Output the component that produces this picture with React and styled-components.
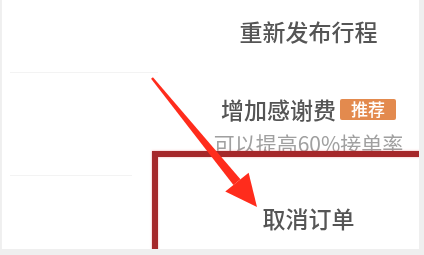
import styled, { createGlobalStyle } from "styled-components";

const GlobalStyle = createGlobalStyle`
    html, body {
        margin: 0;
        padding: 0;
        background: #efefef;
    }
    body {
        font-family: "Noto Sans CJK SC", "Noto Sans", sans-serif;
    }
`;

const Screen = styled.div`
    width: 424px;
    height: 255px;
    background: #efefef;
    overflow: hidden;
`;

const Panel = styled.div`
    position: relative;
    width: 417px;
    height: 249px;
    margin-left: 1px;
    background: #fff;
    border-left: 1px solid #f0f0f0;
    overflow: hidden;
    display: grid;
    grid-template-columns: 196px 1fr;
`;

const LeftCol = styled.div`
    display: flex;
    flex-direction: column;
`;

const LeftBlock = styled.div`
    height: ${(p) => p.h}px;
    margin: 0 ${(p) => p.inset}px 0 8px;
    border-bottom: 1px solid #f3f3f3;
`;

const RightCol = styled.div`
    display: flex;
    flex-direction: column;
    align-items: center;
    filter: blur(0.6px);
`;

const Row = styled.div`
    display: flex;
    flex-direction: column;
    align-items: center;
    padding-top: ${(p) => p.top}px;
`;

const Title = styled.div`
    display: flex;
    align-items: center;
    gap: 4px;
    height: 28px;
    font-size: 23px;
    font-weight: 500;
    line-height: 28px;
    color: #555;
`;

const Badge = styled.span`
    display: inline-flex;
    align-items: center;
    justify-content: center;
    width: 56px;
    height: 21px;
    background: #e38a4e;
    color: #fff;
    font-size: 17px;
    font-weight: 500;
    border-radius: 2px;
`;

const Sub = styled.div`
    margin-top: 7px;
    font-size: 21px;
    line-height: 26px;
    color: #a0a0a0;
`;

const Frame = styled.div`
    position: absolute;
    left: 150px;
    top: 151px;
    width: 300px;
    height: 150px;
    border: 6px solid #a5282a;
    box-shadow: 0 0 2px rgba(230, 90, 90, 0.6), inset 0 0 2px rgba(230, 90, 90, 0.6);
`;

const Arrow = styled.svg`
    position: absolute;
    left: 0;
    top: 0;
    width: 417px;
    height: 249px;
    pointer-events: none;
    filter: blur(0.4px);
`;

export default function App() {
    // arrow geometry
    const tip = [255, 207];
    const d = [0.627, 0.779];
    const p = [-0.779, 0.627];
    const base = [tip[0] - 32 * d[0], tip[1] - 32 * d[1]];
    const start = [150, 78];
    const pt = (c, v, k) => `${c[0] + v[0] * k},${c[1] + v[1] * k}`;
    const shaft = [pt(start, p, -1.2), pt(start, p, 1.2), pt(base, p, 4.5), pt(base, p, -4.5)].join(" ");
    const head = [pt(base, p, -15), tip.join(","), pt(base, p, 15)].join(" ");

    return (
        <>
            <GlobalStyle />
            <Screen>
                <Panel>
                    <LeftCol>
                        <LeftBlock h={72} inset={40} />
                        <LeftBlock h={102} inset={66} />
                    </LeftCol>
                    <RightCol>
                        <Row top={17}>
                            <Title>重新发布行程</Title>
                        </Row>
                        <Row top={50}>
                            <Title>
                                增加感谢费<Badge>推荐</Badge>
                            </Title>
                            <Sub>可以提高60%接单率</Sub>
                        </Row>
                        <Row top={48}>
                            <Title>取消订单</Title>
                        </Row>
                    </RightCol>
                    <Frame />
                    <Arrow viewBox="0 0 417 249">
                        <polygon points={shaft} fill="#ff2c1c" />
                        <polygon points={head} fill="#ff2c1c" />
                    </Arrow>
                </Panel>
            </Screen>
        </>
    );
}
